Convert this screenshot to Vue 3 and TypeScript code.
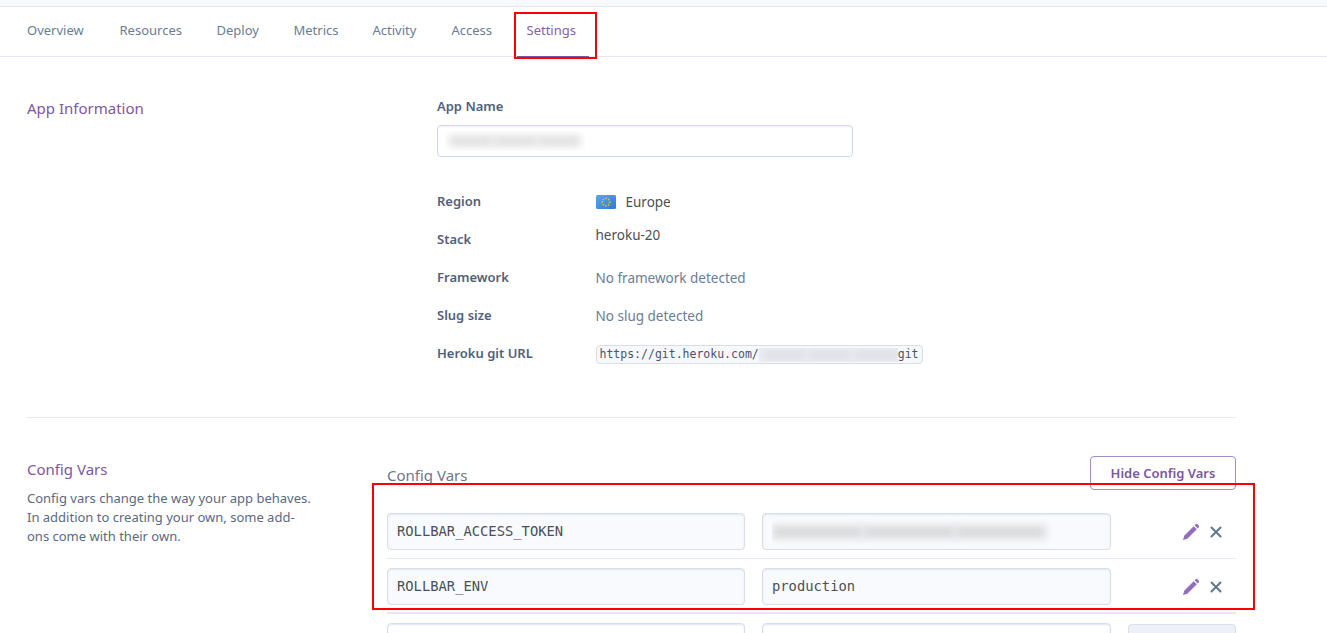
<script setup lang="ts">
interface Tab {
  label: string
  active?: boolean
}
interface ConfigVar {
  key: string
  value: string
  masked?: boolean
}

const tabs: Tab[] = [
  { label: 'Overview' },
  { label: 'Resources' },
  { label: 'Deploy' },
  { label: 'Metrics' },
  { label: 'Activity' },
  { label: 'Access' },
  { label: 'Settings', active: true },
]

const configVars: ConfigVar[] = [
  { key: 'ROLLBAR_ACCESS_TOKEN', value: '', masked: true },
  { key: 'ROLLBAR_ENV', value: 'production' },
]

const starAngles: number[] = [0, 45, 90, 135, 180, 225, 270, 315]
</script>

<template>
  <div class="page">
    <div class="strip"></div>
    <nav class="tabs">
      <a v-for="tab in tabs" :key="tab.label" class="tab" :class="{ active: tab.active }">
        <span>{{ tab.label }}</span>
      </a>
    </nav>

    <main class="content">
      <section class="info">
        <h2 class="side-title info-title">App Information</h2>
        <div class="info-body">
          <div class="label">App Name</div>
          <div class="name-input">
            <div class="mask mask-name"><i></i><i></i><i></i></div>
          </div>
          <dl class="facts">
            <dt>Region</dt>
            <dd class="dark region">
              <svg width="20" height="14" viewBox="0 0 20 14">
                <defs>
                  <linearGradient id="flag" x1="0" y1="0" x2="1" y2="1">
                    <stop offset="0" stop-color="#58a7ee" />
                    <stop offset="1" stop-color="#3277d8" />
                  </linearGradient>
                </defs>
                <rect width="20" height="14" rx="1.5" fill="url(#flag)" />
                <rect
                  v-for="a in starAngles"
                  :key="a"
                  x="9.3"
                  y="2.7"
                  width="1.5"
                  height="1.5"
                  fill="#e6c52c"
                  :transform="`rotate(${a} 10 7.2)`"
                />
              </svg>
              <span>Europe</span>
            </dd>
            <dt>Stack</dt>
            <dd class="dark stack">heroku-20</dd>
            <dt>Framework</dt>
            <dd>No framework detected</dd>
            <dt>Slug size</dt>
            <dd>No slug detected</dd>
            <dt>Heroku git URL</dt>
            <dd class="git">
              <code>
                <span>https://git.heroku.com/</span>
                <span class="mask mask-git"><i></i><i></i><i></i></span>
                <span>git</span>
              </code>
            </dd>
          </dl>
        </div>
      </section>

      <section class="config">
        <aside>
          <h2 class="side-title">Config Vars</h2>
          <p>Config vars change the way your app behaves.<br />In addition to creating your own, some add-<br />ons come with their own.</p>
        </aside>
        <div class="vars">
          <header>
            <h3>Config Vars</h3>
            <button type="button" class="hide"><span>Hide Config Vars</span></button>
          </header>
          <div v-for="v in configVars" :key="v.key" class="row">
            <div class="field">{{ v.key }}</div>
            <div class="field">
              <div v-if="v.masked" class="mask mask-token"><i></i><i></i><i></i></div>
              <template v-else>{{ v.value }}</template>
            </div>
            <div class="actions">
              <svg width="18" height="18" viewBox="0 0 18 18" fill="#9170b8">
                <path d="M1 17 2.2 12.7 11.7 3.2 14.8 6.3 5.3 15.8Z" />
                <path d="M12.6 2.3 13.8 1.1Q14.7.4 15.6 1.3L16.7 2.4Q17.6 3.3 16.9 4.2L15.7 5.4Z" />
              </svg>
              <svg width="12" height="12" viewBox="0 0 12 12" fill="none" stroke="#62758f" stroke-width="2" stroke-linecap="round">
                <path d="M1.5 1.5 10.5 10.5M10.5 1.5 1.5 10.5" />
              </svg>
            </div>
          </div>
          <div class="row new-row">
            <div class="field empty"></div>
            <div class="field empty"></div>
            <div class="add"></div>
          </div>
        </div>
      </section>
    </main>

    <div class="highlight highlight-tab"></div>
    <div class="highlight highlight-vars"></div>
  </div>
</template>

<style>
body {
  margin: 0;
  overflow: hidden;
}
</style>

<style scoped>
* {
  box-sizing: border-box;
}
.page {
  position: relative;
  width: 1327px;
  height: 633px;
  overflow: hidden;
  background: #fff;
  color: #596981;
  font-family: 'Noto Sans', 'Open Sans', sans-serif;
  font-size: 13px;
}
.strip {
  height: 7px;
  background: #f7f8fc;
  border-bottom: 1px solid #e3e8f0;
}
.tabs {
  display: grid;
  grid-template-columns: 92.5px 97px 77px 79px 79px 75px 72px;
  height: 50px;
  padding-left: 17px;
  border-bottom: 1px solid #e3e8f0;
}
.tab {
  height: 50px;
  padding-left: 10px;
  line-height: 47px;
  white-space: nowrap;
  color: #6b7c95;
}
.tab.active {
  color: #8560a8;
  border-bottom: 1px solid #79589f;
}
.content {
  width: 1209px;
  margin-left: 27px;
}
.side-title,
h3 {
  margin: 0;
  font-size: 15px;
  font-weight: 400;
  line-height: 20px;
  color: #8056a5;
}
.info {
  display: flex;
  height: 361px;
  border-bottom: 1px solid #e6e9f0;
}
.info-title {
  width: 410px;
  padding-top: 41px;
}
.info-body {
  padding-top: 39px;
}
.label,
dt {
  font-weight: 600;
  line-height: 20px;
  color: #51607a;
}
.name-input {
  display: flex;
  align-items: center;
  width: 416px;
  height: 32px;
  margin-top: 9px;
  padding-left: 7px;
  border: 1px solid #cfd7e6;
  border-radius: 4px;
  box-shadow: inset 0 1px 2px #edf0f6;
}
.facts {
  display: grid;
  grid-template-columns: 158.5px auto;
  grid-auto-rows: 38px;
  margin: 34px 0 0;
}
dd {
  margin: 0;
  padding-top: 1px;
  font-size: 13.5px;
  line-height: 20px;
  color: #6b7c95;
}
.dark {
  color: #4c4f57;
}
.region {
  display: flex;
  gap: 10px;
}
.region svg {
  margin-top: 3px;
}
.stack {
  margin-top: -5px;
}
.git {
  padding-top: 2px;
}
code {
  display: flex;
  align-items: center;
  width: 327px;
  height: 19px;
  padding-left: 3px;
  border: 1px solid #d9dde5;
  border-radius: 4px;
  background: #f7f8fc;
  color: #475468;
  font: 11.5px/17px 'DejaVu Sans Mono', monospace;
}
.mask {
  display: flex;
  overflow: hidden;
}
.mask i {
  display: block;
  filter: blur(4px);
}
.mask-name {
  width: 140px;
  height: 20px;
  padding: 5px 4px;
}
.mask-name i {
  flex: 1;
  background: #dcdcdd;
}
.mask-git {
  width: 139px;
  height: 14px;
  background: #eceef3;
}
.mask-git i {
  flex: 1;
  margin: 2px 0 2px 4px;
  background: #dddfe5;
}
.mask-token {
  width: 286px;
  height: 28px;
  padding: 8px 12px 8px 0;
}
.mask-token i {
  flex: 1;
  background: #d6d7d9;
}
.config {
  display: flex;
  padding-top: 38px;
}
aside {
  width: 360px;
  padding-top: 3px;
}
aside p {
  margin: 10px 0 0;
  line-height: 19px;
  white-space: nowrap;
}
.vars {
  width: 849px;
}
header {
  display: flex;
  justify-content: space-between;
  height: 48px;
}
h3 {
  padding-top: 9px;
  color: #6d7689;
}
.hide {
  width: 146px;
  height: 34px;
  padding: 0;
  border: 1px solid #a58bc4;
  border-radius: 4px;
  background: #fff;
  color: #79589f;
  font: 600 13px/32px 'Noto Sans', sans-serif;
  white-space: nowrap;
}
.row {
  display: grid;
  grid-template-columns: 358px 349px 108px;
  column-gap: 17px;
  height: 55px;
  padding-top: 9px;
  border-bottom: 1px solid #e5e9f1;
}
.row:nth-child(3) {
  border-bottom: 2px solid #e5e9f1;
}
.field {
  height: 37px;
  padding-left: 9px;
  border: 1px solid #d7deea;
  border-radius: 4px;
  background: #f9fafd;
  box-shadow: inset 0 1px 2px #e1e6f0;
  color: #4b4f59;
  font: 13.8px/35px 'DejaVu Sans Mono', monospace;
}
.field .mask-token {
  margin-top: 4px;
}
.field.empty {
  background: #fff;
}
.actions {
  display: flex;
  align-items: center;
  gap: 10px;
  height: 37px;
  padding-left: 54px;
}
.add {
  height: 37px;
  margin-top: 1px;
  border: 1px solid #d7deea;
  border-radius: 4px;
  background: #edf0f6;
}
.highlight {
  position: absolute;
  border: 2px solid #f00;
}
.highlight-tab {
  left: 514px;
  top: 12px;
  width: 83px;
  height: 47px;
}
.highlight-vars {
  left: 372px;
  top: 483px;
  width: 883px;
  height: 127px;
}
</style>
